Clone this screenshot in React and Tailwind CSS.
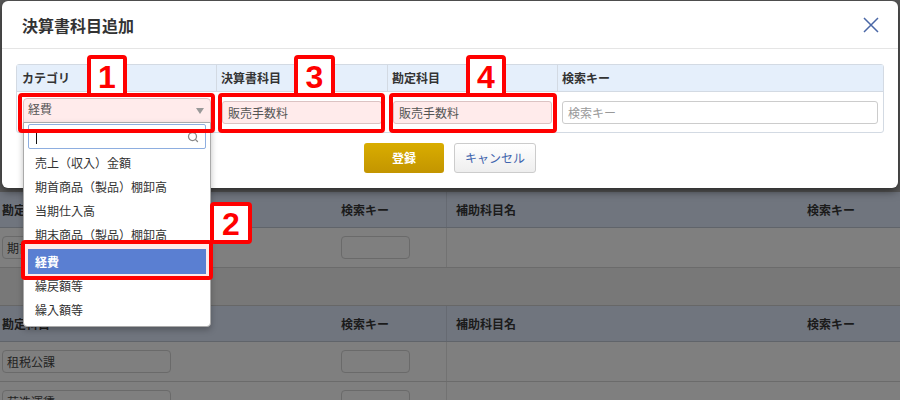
import React from 'react';
import { Search } from 'lucide-react';

const font = "font-['Noto_Sans_CJK_JP','Noto_Sans',sans-serif]";

const categories = [
  '売上（収入）金額',
  '期首商品（製品）棚卸高',
  '当期仕入高',
  '期末商品（製品）棚卸高',
  '経費',
  '繰戻額等',
  '繰入額等',
];

function BgHeader() {
  return (
    <div className="grid grid-cols-[336px_110px_356px_1fr] h-[36px] bg-[#70757e] border-b border-[#60646a] text-[12px] font-bold text-[#1b1b1b] leading-none">
      <div className="flex items-center pl-[2px]">勘定科目</div>
      <div className="flex items-center pl-[5px]">検索キー</div>
      <div className="flex items-center pl-[9px] border-l border-[#666a72]">補助科目名</div>
      <div className="flex items-center pl-[5px]">検索キー</div>
    </div>
  );
}

function BgRow({ name }) {
  return (
    <div className="grid grid-cols-[336px_110px_356px_1fr] h-[40px] bg-[#7f7f7f] border-b border-[#6b6b6b]">
      <div className="pt-[8px] pl-[2px]">
        <div className="w-[169px] h-[23px] rounded-[4px] border border-[#6a6a6a] px-[4px] flex items-center text-[12px] text-[#222] leading-none">
          {name}
        </div>
      </div>
      <div className="pt-[8px] pl-[5px]">
        <div className="w-[69px] h-[23px] rounded-[4px] border border-[#6a6a6a]" />
      </div>
      <div className="border-l border-[#727272]" />
      <div />
    </div>
  );
}

function Badge({ n, className }) {
  return (
    <div
      className={`absolute h-[42px] bg-white border-4 border-[#ff0000] rounded-[4px] flex items-center justify-center pt-[2px] font-['Liberation_Sans',Arial,sans-serif] font-bold text-[32px] leading-none text-[#ff0000] ${className}`}
    >
      {n}
    </div>
  );
}

function Dropdown() {
  return (
    <div className="absolute left-[6px] top-[30px] w-[188px] bg-white border border-[#aaaaaa] rounded-b-[4px] shadow-[0_3px_6px_rgba(0,0,0,0.25)] pb-[4px]">
      <div className="mx-[4px] mt-[1px] h-[25px] border border-[#8eaee0] rounded-[2px] flex items-center justify-between pl-[7px] pr-[6px]">
        <span className="w-px h-[14px] bg-[#111]" />
        <Search size={12} strokeWidth={2.5} className="text-[#888]" />
      </div>
      <ul className="mt-[2px] text-[12px] text-[#333] leading-none">
        {categories.map((c) =>
          c === '経費' ? (
            <li
              key={c}
              className="relative z-20 mx-[4px] mt-[2px] h-[25px] px-[7px] flex items-center bg-[#5a7fd2] text-white font-bold"
            >
              {c}
            </li>
          ) : (
            <li key={c} className="h-[24px] px-[11px] flex items-center">
              {c}
            </li>
          )
        )}
      </ul>
    </div>
  );
}

function Modal() {
  return (
    <div className="absolute left-[2px] top-[1px] w-[896px] bg-white rounded-[6px] shadow-[0_3px_10px_rgba(0,0,0,0.55)]">
      <div className="h-[48px] border-b border-[#e5e5e5] flex items-center justify-between pl-[20px] pr-[19px]">
        <h2 className="text-[16px] font-bold text-[#333] leading-none">決算書科目追加</h2>
        <svg width="16" height="16" viewBox="0 0 16 16" className="mt-[1px]">
          <path d="M1 1L15 15M15 1L1 15" stroke="#4a67a6" strokeWidth="1.5" fill="none" />
        </svg>
      </div>
      <div className="pt-[15px] px-[14px] pb-[15px]">
        <div className="border border-[#d3dae3] rounded-[3px]">
          <div className="grid grid-cols-[200px_171px_170px_1fr] h-[27px] bg-[#e5effb] border-b border-[#d3dae3] text-[12px] font-bold text-[#333] leading-none">
            <div className="flex items-center px-[5px] border-r border-[#d3dae3]">カテゴリ</div>
            <div className="flex items-center px-[4px] border-r border-[#d3dae3]">決算書科目</div>
            <div className="flex items-center px-[4px] border-r border-[#d3dae3]">勘定科目</div>
            <div className="flex items-center px-[4px]">検索キー</div>
          </div>
          <div className="grid grid-cols-[200px_171px_170px_1fr] h-[40px] text-[12px] leading-none">
            <div className="relative pl-[6px] pr-[6px] pt-[6px]">
              <div className="h-[26px] bg-[#ffebeb] border border-[#dcc3c3] rounded-t-[4px] flex items-center justify-between pl-[4px] pr-[6px] pb-[4px] text-[#555]">
                <span>経費</span>
                <svg width="8" height="6" viewBox="0 0 8 6" className="mt-[3px]">
                  <path d="M0 0H8L4 6Z" fill="#999" />
                </svg>
              </div>
              <Dropdown />
            </div>
            <div className="pl-[5px] pr-[6px] pt-[9px]">
              <div className="h-[23px] bg-[#ffebeb] border border-[#dcc3c3] rounded-[3px] flex items-center px-[5px] text-[#555]">
                販売手数料
              </div>
            </div>
            <div className="pl-[5px] pr-[6px] pt-[9px]">
              <div className="h-[23px] bg-[#ffebeb] border border-[#dcc3c3] rounded-[3px] flex items-center px-[5px] text-[#555]">
                販売手数料
              </div>
            </div>
            <div className="pl-[4px] pr-[5px] pt-[9px]">
              <div className="h-[23px] bg-white border border-[#cccccc] rounded-[3px] flex items-center px-[5px] text-[#999]">
                検索キー
              </div>
            </div>
          </div>
        </div>
        <div className="mt-[10px] flex justify-center gap-[10px]">
          <button className="w-[80px] h-[30px] rounded-[3px] bg-gradient-to-b from-[#d9ad00] to-[#c39500] text-white text-[12px] font-bold leading-none">
            登録
          </button>
          <button className="w-[82px] h-[30px] rounded-[3px] border border-[#cccccc] bg-gradient-to-b from-white to-[#eeeeee] text-[#3f64ad] text-[12px] leading-none">
            キャンセル
          </button>
        </div>
      </div>
    </div>
  );
}

export default function App() {
  return (
    <div className={`relative w-[900px] h-[400px] overflow-hidden bg-[#595959] ${font}`}>
      <div className="h-[192px] bg-[#595959]" />
      <BgHeader />
      <BgRow name="期首商品棚卸高" />
      <div className="h-[38px] bg-[#787878] border-b border-[#676767]" />
      <BgHeader />
      <BgRow name="租税公課" />
      <BgRow name="荷造運賃" />

      <Modal />

      <div className="absolute z-10 left-[18px] top-[93px] w-[197px] h-[40px] border-4 border-[#ff0000] rounded-[4px]" />
      <div className="absolute z-10 left-[218px] top-[93px] w-[167px] h-[40px] border-4 border-[#ff0000] rounded-[4px]" />
      <div className="absolute z-10 left-[389px] top-[93px] w-[168px] h-[40px] border-4 border-[#ff0000] rounded-[4px]" />
      <div className="absolute z-10 left-[21px] top-[240px] w-[192px] h-[40px] border-4 border-[#ff0000] rounded-[4px] bg-[#fdeaea]" />

      <Badge n="1" className="z-10 left-[87px] top-[55px] w-[40px]" />
      <Badge n="3" className="z-10 left-[294px] top-[55px] w-[41px]" />
      <Badge n="4" className="z-10 left-[466px] top-[55px] w-[40px]" />
      <Badge n="2" className="z-10 left-[210px] top-[202px] w-[42px]" />
    </div>
  );
}
